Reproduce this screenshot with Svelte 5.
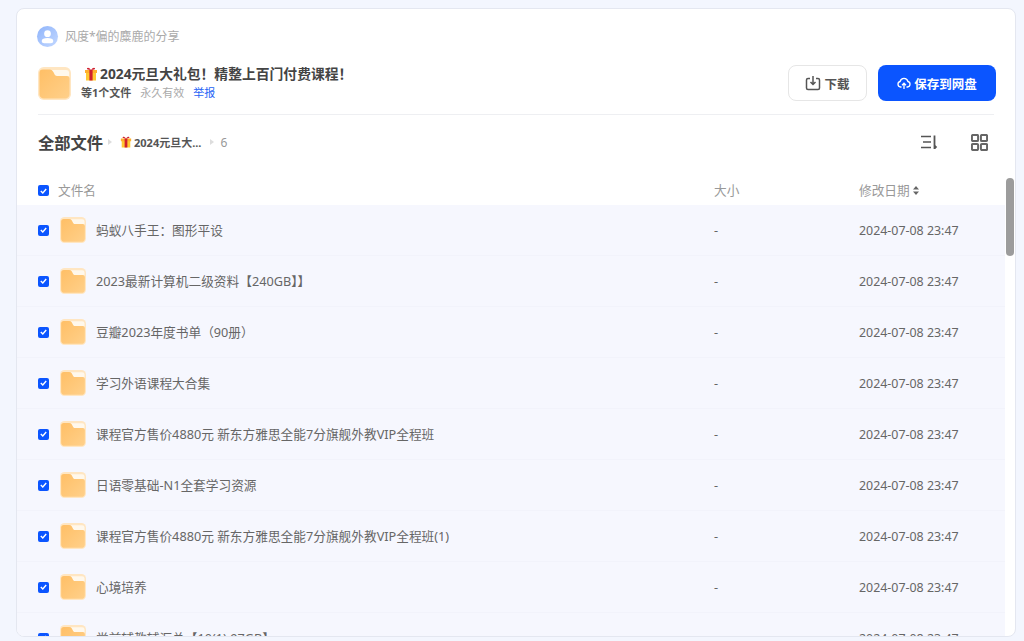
<script>
    const files = [
        "蚂蚁八手王\uFF1A图形平设",
        "2023最新计算机二级资料【240GB】】",
        "豆瓣2023年度书单\uFF0890册\uFF09",
        "学习外语课程大合集",
        "课程官方售价4880元 新东方雅思全能7分旗舰外教VIP全程班",
        "日语零基础-N1全套学习资源",
        "课程官方售价4880元 新东方雅思全能7分旗舰外教VIP全程班(1)",
        "心境培养",
        "党前辅教辅汇总【10(1).97GB】"
    ];
</script>

<svg class="defs" width="0" height="0">
    <defs>
        <linearGradient id="folderBody" x1="0" y1="0" x2="1" y2="1">
            <stop offset="0" stop-color="#ffbf66"/>
            <stop offset="1" stop-color="#ffd08a"/>
        </linearGradient>
    </defs>
</svg>

{#snippet folder(size)}
    <svg class="folder" width={size} height={size} viewBox="0 0 34 34">
        <rect width="34" height="34" rx="6" fill="#ffe6c2"/>
        <path d="M14 3h15a3 3 0 0 1 3 3v5H18z" fill="#fff8ec"/>
        <path d="M1.500 6a3.500 3.500 0 0 1 3.500-3.500h7c2 0 3 1 4 3l1 2c.6 1.200 1.400 1.700 2.500 1.700H30a2.500 2.500 0 0 1 2.500 2.500V28a4.500 4.500 0 0 1-4.500 4.500H6A4.500 4.500 0 0 1 1.500 28z" fill="url(#folderBody)"/>
    </svg>
{/snippet}

{#snippet gift(size)}
    <svg class="gift" width={size} height={size} viewBox="0 0 14 14">
        <path d="M2 5h10v8.500H2z" fill="#ffc933"/>
        <path d="M1 3h12v3H1z" fill="#ffb02e"/>
        <path d="M5.400 3h3.200v10.500H5.400z" fill="#d0202e"/>
        <path d="M7 3C5.500.500 3.500.300 3 1.300 2.600 2.300 4 3 7 3c3 0 4.400-.7 4-1.700C10.500.300 8.500.500 7 3z" fill="#d0202e"/>
    </svg>
{/snippet}

{#snippet check()}
    <span class="check">
        <svg width="7" height="6" viewBox="0 0 7 6"><path d="M.8 3l2 2L6.200 1" fill="none" stroke="#fff" stroke-width="1.400"/></svg>
    </span>
{/snippet}

<div class="card">
    <div class="top">
        <div class="sharer">
            <span class="avatar">
                <svg width="22" height="22" viewBox="0 0 22 22">
                    <circle cx="11" cy="8" r="3.500" fill="#fff"/>
                    <path d="M5 15.500c0-2 2.500-3 6-3s6 1 6 3v.5c0 1.300-1 2-2.500 2h-7C6 18 5 17.300 5 16z" fill="#fff"/>
                </svg>
            </span>
            <span>风度*偏的麋鹿的分享</span>
        </div>
        <div class="share">
            <div class="share-left">
                {@render folder(33)}
                <div>
                    <div class="share-title">{@render gift(14)}<span>2024元旦大礼包&#xFF01;精整上百门付费课程&#xFF01;</span></div>
                    <div class="meta">
                        <b>等1个文件</b>
                        <span class="valid">永久有效</span>
                        <span class="report">举报</span>
                    </div>
                </div>
            </div>
            <div class="actions">
                <button class="btn">
                    <svg width="16" height="16" viewBox="0 0 16 16" fill="none" stroke="#555" stroke-width="1.500">
                        <path d="M5 3.500H3a1.500 1.500 0 0 0-1.500 1.500v8A1.500 1.500 0 0 0 3 14.500h10a1.500 1.500 0 0 0 1.500-1.500V5A1.500 1.500 0 0 0 13 3.500h-2"/>
                        <path d="M8 1v8M5.500 7L8 9.500 10.500 7"/>
                    </svg>
                    下载
                </button>
                <button class="btn primary">
                    <svg width="14" height="14" viewBox="0 0 14 14" fill="none" stroke="#fff" stroke-width="1.300">
                        <path d="M4.500 11H3.500a2.800 2.800 0 0 1-.4-5.500 4 4 0 0 1 7.800 0 2.800 2.800 0 0 1-.4 5.500H9.500"/>
                        <path d="M7 13V7.500M5 9.200l2-2 2 2"/>
                    </svg>
                    保存到网盘
                </button>
            </div>
        </div>
    </div>

    <div class="crumbs-bar">
        <div class="crumbs">
            <span class="root">全部文件</span>
            <i class="arrow"></i>
            {@render gift(12)}
            <span class="crumb">2024元旦大...</span>
            <i class="arrow"></i>
            <span class="count">6</span>
        </div>
        <div class="tools">
            <svg width="18" height="16" viewBox="0 0 18 16" fill="none" stroke="#555" stroke-width="1.500">
                <path d="M1 2.500h10M3 8h8M1 13.500h10"/>
                <path d="M14.500 1.500V15" stroke-width="1.800"/>
                <path d="M15 15v-4l2.200 2z" fill="#555" stroke="none"/>
            </svg>
            <svg width="17" height="17" viewBox="0 0 18 18" fill="none" stroke="#666" stroke-width="2.100">
                <rect x="1" y="1" width="6.500" height="6.500" rx="1"/>
                <rect x="10.500" y="1" width="6.500" height="6.500" rx="1"/>
                <rect x="1" y="10.500" width="6.500" height="6.500" rx="1"/>
                <rect x="10.500" y="10.500" width="6.500" height="6.500" rx="1"/>
            </svg>
        </div>
    </div>

    <div class="table">
        <div class="head">
            <div class="col-name">{@render check()}<span class="label">文件名</span></div>
            <div class="col-size"><span class="label">大小</span></div>
            <div class="col-date"><span class="label">修改日期</span>
                <svg width="6" height="9" viewBox="0 0 6 9"><path d="M3 0l3 3.500H0zM3 9L0 5.500h6z" fill="#666"/></svg>
            </div>
        </div>
        <div class="rows">
            {#each files as name}
                <div class="row">
                    <div class="col-name">
                        {@render check()}
                        {@render folder(26)}
                        <span class="name">{name}</span>
                    </div>
                    <div class="col-size">-</div>
                    <div class="col-date date">2024-07-08 23:47</div>
                </div>
            {/each}
        </div>
        <div class="thumb"></div>
    </div>
</div>

<style>
    :global(body) {
        margin: 0;
        background: #f3f6fe;
        font-family: "Noto Sans", "Noto Sans CJK SC", sans-serif;
    }

    .defs {
        position: absolute;
    }

    .card {
        box-sizing: border-box;
        height: 629px;
        margin: 8px 8px 0 16px;
        background: #fff;
        border: 1px solid #e4e7f0;
        border-radius: 8px;
        overflow: hidden;
        display: flex;
        flex-direction: column;
    }

    .top {
        margin: 0 21px 0 21px;
        padding-top: 16px;
        height: 106px;
        box-sizing: border-box;
        border-bottom: 1px solid #eeeff2;
    }

    .sharer {
        display: flex;
        align-items: center;
        gap: 7px;
        font-size: 12px;
        color: #aaa;
        height: 22px;
        margin-left: -1px;
    }

    .avatar {
        width: 21px;
        height: 21px;
        border-radius: 50%;
        background: linear-gradient(135deg, #8fb4fb, #c3d8ff);
        overflow: hidden;
    }

    .avatar svg {
        display: block;
        width: 21px;
        height: 21px;
    }

    .share {
        display: flex;
        justify-content: space-between;
        align-items: center;
        margin-top: 18px;
    }

    .share-left {
        display: flex;
        align-items: center;
        gap: 10px;
    }

    .folder {
        flex: none;
        display: block;
    }

    .share-title {
        display: flex;
        align-items: center;
        gap: 2px;
        margin: -1px 0 1px 3px;
        font-size: 13.800px;
        line-height: 20px;
        font-weight: 700;
        color: #444;
    }

    .gift {
        flex: none;
    }

    .meta {
        display: flex;
        gap: 9px;
        font-size: 11px;
        line-height: 16px;
        color: #aaa;
    }

    .meta b {
        color: #555;
    }

    .report {
        color: #2563f5;
    }

    .actions {
        display: flex;
        gap: 11px;
        margin-right: -2px;
    }

    .btn {
        display: flex;
        align-items: center;
        justify-content: center;
        gap: 3px;
        width: 79px;
        height: 36px;
        border: 1px solid #e6e6e6;
        border-radius: 8px;
        background: #fff;
        color: #555;
        font: 700 12.500px "Noto Sans", "Noto Sans CJK SC", sans-serif;
    }

    .primary {
        width: 118px;
        border: none;
        background: #0b55ff;
        color: #fff;
    }

    .crumbs-bar {
        display: flex;
        justify-content: space-between;
        align-items: center;
        height: 54px;
        margin: 0 27px 7px 21px;
    }

    .crumbs {
        display: flex;
        align-items: center;
        font-size: 11px;
        color: #555;
    }

    .root {
        font-size: 16.250px;
        font-weight: 700;
        color: #444;
    }

    .arrow {
        width: 0;
        height: 0;
        margin: 0 8px 0 5px;
        border-left: 4px solid #ddd;
        border-top: 3px solid transparent;
        border-bottom: 3px solid transparent;
    }

    .crumb {
        margin: 0 4px 0 2px;
        font-weight: 700;
    }

    .count {
        margin-left: -2px;
        color: #999;
        font-size: 12px;
    }

    .tools {
        display: flex;
        align-items: center;
        gap: 33px;
    }

    .tools svg {
        display: block;
    }

    .table {
        position: relative;
        flex: 1;
        min-height: 0;
        overflow: hidden;
    }

    .head,
    .row {
        display: flex;
        align-items: center;
        font-size: 12.700px;
    }

    .head {
        height: 29px;
        margin-right: 10px;
        color: #999;
    }

    .label,
    .name {
        padding-bottom: 2px;
    }

    .rows {
        background: #f6f7fe;
        margin-right: 10px;
    }

    .row {
        height: 50px;
        border-bottom: 1px solid #f2f3fb;
        color: #666;
    }

    .col-name {
        display: flex;
        align-items: center;
        width: 697px;
        flex: none;
        padding-left: 21px;
        box-sizing: border-box;
    }

    .col-size {
        display: flex;
        align-items: center;
        width: 145px;
        flex: none;
    }

    .col-date {
        display: flex;
        align-items: center;
        gap: 3px;
        flex: none;
    }

    .date {
        font-size: 12.400px;
    }

    .check {
        flex: none;
        display: flex;
        align-items: center;
        justify-content: center;
        width: 11px;
        height: 11px;
        border-radius: 2px;
        background: #0b55ff;
        margin-right: 9px;
    }

    .row .check {
        margin-right: 11px;
    }

    .name {
        margin-left: 10px;
        white-space: nowrap;
    }

    .thumb {
        position: absolute;
        top: 2px;
        right: 1px;
        width: 8px;
        height: 78px;
        border-radius: 4px;
        background: #9c9c9c;
    }
</style>
